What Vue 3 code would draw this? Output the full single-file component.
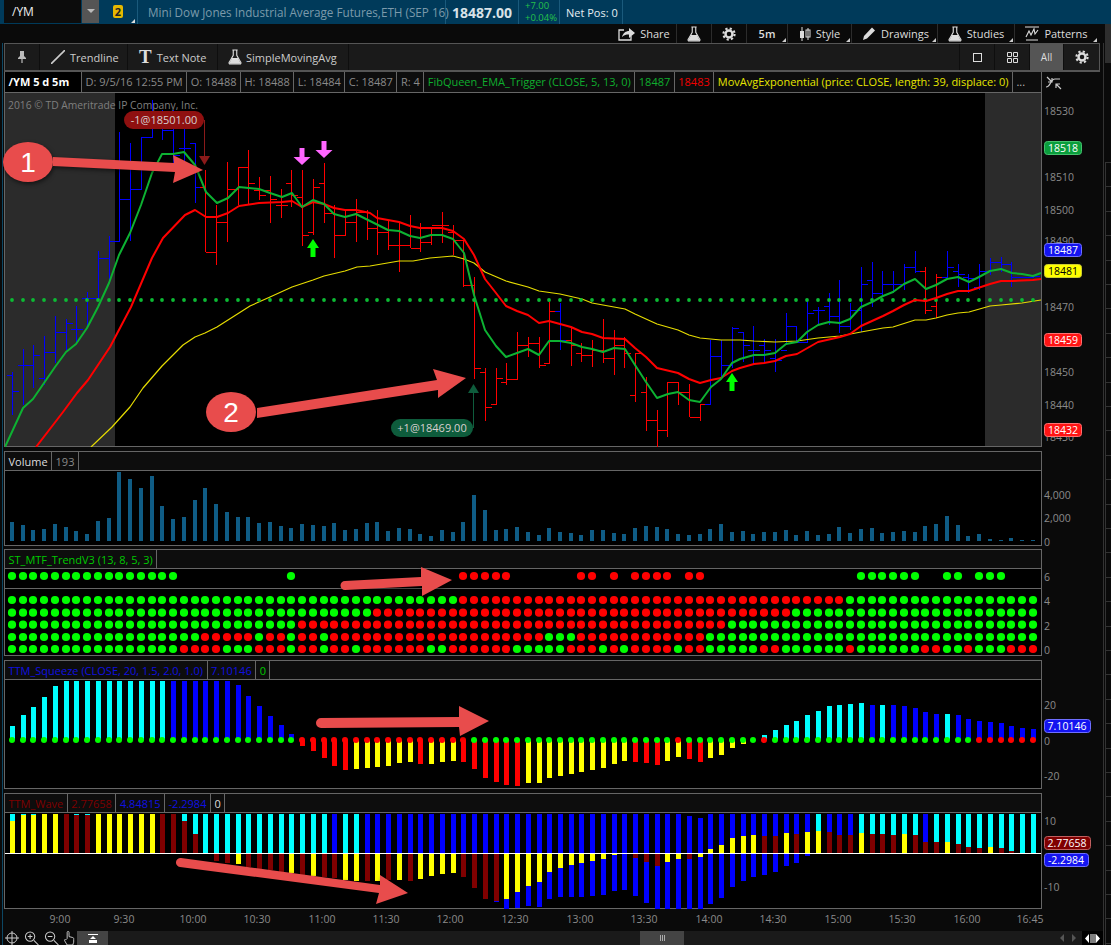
<template>
  <div class="app">
    <svg class="defs" width="0" height="0">
      <symbol id="flask" viewBox="0 0 16 18">
        <path d="M5 1h6M6 1v6L1.500 15a1.200 1.200 0 0 0 1 2h11a1.200 1.200 0 0 0 1-2L10 7V1" fill="none" stroke="currentColor" stroke-width="1.300" />
        <path d="M4.600 10h6.800l3.400 6.600H1.200z" fill="currentColor" />
      </symbol>
      <symbol id="gear" viewBox="0 0 16 16">
        <circle cx="8" cy="8" r="6.400" fill="none" stroke="currentColor" stroke-width="2.400" stroke-dasharray="2.500 2.530" />
        <circle cx="8" cy="8" r="4" fill="none" stroke="currentColor" stroke-width="2.800" />
      </symbol>
    </svg>

    <!-- quote bar -->
    <header class="quote">
      <div class="symbol">/YM</div>
      <div class="drop"><i></i></div>
      <div class="link"><b>2</b></div>
      <div class="q-cell q-name">Mini Dow Jones Industrial Average Futures,ETH (SEP 16)</div>
      <div class="q-cell q-last">18487.00</div>
      <div class="q-cell q-chg"><span>+7.00</span><span>+0.04%</span></div>
      <div class="q-cell q-pos">Net Pos: 0</div>
    </header>

    <!-- chart actions -->
    <nav class="actions">
      <div class="act a-share">
        <svg width="17" height="14" viewBox="0 0 17 14"><path d="M6 3H1v10h12V9" fill="none" stroke="#ddd" stroke-width="1.300" /><path d="M4 10c1-4 4-6 7-6V1l6 5-6 5V7.500C8 7.500 6 8 4 10z" fill="#ddd" /></svg>
        <span>Share</span>
      </div>
      <div class="act a-icon"><svg class="ic" width="14" height="16"><use href="#flask" /></svg></div>
      <div class="act a-icon"><svg class="ic" width="14" height="14"><use href="#gear" /></svg></div>
      <div class="act has-menu a-tf"><span>5m</span></div>
      <div class="act has-menu a-style">
        <svg width="12" height="14" viewBox="0 0 12 14"><path d="M3 0v14M9 1v12" stroke="#ddd" /><rect x="1" y="4" width="4" height="7" fill="#ddd" /><rect x="7" y="3" width="4" height="7" fill="none" stroke="#ddd" /></svg>
        <span>Style</span>
      </div>
      <div class="act has-menu a-draw">
        <svg width="13" height="13" viewBox="0 0 13 13"><path d="M0 13l1-4 8-8.500 3 3-8 8z" fill="#ddd" /></svg>
        <span>Drawings</span>
      </div>
      <div class="act has-menu a-studies">
        <svg class="ic" width="14" height="16"><use href="#flask" /></svg>
        <span>Studies</span>
      </div>
      <div class="act has-menu a-patterns">
        <svg width="14" height="15" viewBox="0 0 14 15"><path d="M0 1h14M1 14h12" stroke="#ddd" /><path d="M1 11l3-6 2 4 3-6 1 5 3-4" fill="none" stroke="#ddd" stroke-width="1.100" /></svg>
        <span>Patterns</span>
      </div>
    </nav>

    <div class="workspace">
      <div class="charts">
        <div class="tools">
          <div class="tool pin">
            <svg width="8" height="12" viewBox="0 0 8 12"><path d="M2 0h4v5l2 2v1H0V7l2-2zM3.400 8h1.200v4H3.400z" fill="#bbb" /></svg>
          </div>
          <div class="tool t-line">
            <svg width="14" height="14" viewBox="0 0 14 14"><path d="M0 14L14 0" stroke="#ccc" stroke-width="1.600" /></svg>
            <span>Trendline</span>
          </div>
          <div class="tool t-note"><em class="t-mark">T</em><span>Text Note</span></div>
          <div class="tool t-sma"><svg class="ic" width="14" height="16"><use href="#flask" /></svg><span>SimpleMovingAvg</span></div>
          <div class="tool-space"></div>
          <div class="tool square-cell"><i class="square"></i></div>
          <div class="tool square-cell">
            <svg width="11" height="11" viewBox="0 0 11 11"><path d="M.5.500h4v4h-4zM6.500.500h4v4h-4zM.5 6.500h4v4h-4zM6.500 6.500h4v4h-4z" fill="none" stroke="#ddd" /></svg>
          </div>
          <div class="tool all">All</div>
          <div class="tool square-cell last"><svg class="ic" width="14" height="14"><use href="#gear" /></svg></div>
        </div>

        <!-- price pane -->
        <div class="legend">
          <span class="lg title">/YM 5 d 5m</span>
          <span class="lg">D: 9/5/16 12:55 PM</span>
          <span class="lg">O: 18488</span>
          <span class="lg">H: 18488</span>
          <span class="lg">L: 18484</span>
          <span class="lg">C: 18487</span>
          <span class="lg">R: 4</span>
          <span class="lg fib">FibQueen_EMA_Trigger (CLOSE, 5, 13, 0)</span>
          <span class="lg fib">18487</span>
          <span class="lg red">18483</span>
          <span class="lg yel">MovAvgExponential (price: CLOSE, length: 39, displace: 0)</span>
          <span class="lg dots">...</span>
        </div>
        <svg class="plot" width="1099" height="354" viewBox="4 93 1099 354">
          <defs><clipPath id="pc"><rect x="5" y="93" width="1037" height="354" /></clipPath></defs>
          <rect class="frame" x="4.500" y="92.500" width="1037" height="354" fill="#000" />
          <rect x="5" y="93" width="110" height="353" fill="#2b2b2b" />
          <rect x="985" y="93" width="56" height="353" fill="#2b2b2b" />
          <text x="8" y="109" class="copy">2016 © TD Ameritrade IP Company, Inc.</text>
          <g clip-path="url(#pc)">
            <path v-for="b in priceBars" :key="b.i" :d="b.d" :stroke="b.color" fill="none" shape-rendering="crispEdges" />
            <polyline :points="yellowLine" class="ln" stroke="#e6dc00" stroke-width="1.200" />
            <circle v-for="i in 96" :key="i" :cx="px(i - 1)" cy="300" r="1.900" fill="#0cba34" />
            <polyline :points="redLine" class="ln" stroke="#ff0000" stroke-width="2" />
            <polyline :points="greenLine" class="ln" stroke="#0db232" stroke-width="2" />
          </g>
          <!-- trade markers -->
          <path d="M204.500 120v36" stroke="#8b1a1a" />
          <path d="M199 156h11l-5.500 9z" fill="#8b1a1a" />
          <rect x="124" y="111" width="80" height="18" rx="9" fill="#8f1010" />
          <text x="164" y="124" class="pill">-1@18501.00</text>
          <path d="M473.500 428v-35" stroke="#0e5c3c" />
          <path d="M468 393h11l-5.500-9z" fill="#0e5c3c" />
          <rect x="391" y="419" width="82" height="18" rx="9" fill="#0e5c3c" />
          <text x="432" y="432" class="pill">+1@18469.00</text>
          <path v-for="a in signalArrows" :key="a.x" :d="a.d" :fill="a.fill" />
          <!-- price axis -->
          <text v-for="t in priceTicks" :key="t.y" x="1044" :y="t.y" class="ax">{{ t.label }}</text>
          <g v-for="b in priceBadges" :key="b.label">
            <rect x="1044.500" :y="b.y - 6.500" width="37" height="13" rx="3" :fill="b.fill" :stroke="b.stroke" />
            <text x="1063" :y="b.y + 4" class="badge" :fill="b.text">{{ b.label }}</text>
          </g>
          <!-- auto fit -->
          <g transform="translate(1046 76)" fill="none" stroke="#ccc" stroke-width="1.200">
            <path d="M1 1l5 5M6 2v4H2M15 13l-5-5M10 12V8h4" />
            <path d="M0 11c5 0 4-8 9-8h5" />
          </g>
        </svg>

        <!-- volume -->
        <div class="legend sub">
          <span class="lg vol">Volume</span>
          <span class="lg">193</span>
        </div>
        <svg class="plot" width="1099" height="75" viewBox="4 471 1099 75">
          <rect class="frame" x="4.500" y="470.500" width="1037" height="75" fill="#000" />
          <rect v-for="b in volumeBars" :key="b.x" :x="b.x" :y="b.y" width="4" :height="b.h" fill="#0f5c85" />
          <text x="1044" y="499" class="ax">4,000</text>
          <text x="1044" y="522" class="ax">2,000</text>
          <text x="1044" y="546" class="ax">0</text>
        </svg>

        <!-- trend dots -->
        <div class="legend sub tight">
          <span class="lg mtf">ST_MTF_TrendV3 (13, 8, 5, 3)</span>
        </div>
        <svg class="plot" width="1099" height="87" viewBox="4 569 1099 87">
          <rect class="frame" x="4.500" y="568.500" width="1037" height="87" fill="#000" />
          <path d="M5 588.500h1036" stroke="#666" />
          <circle v-for="d in trendDots" :key="d.k" :cx="d.x" :cy="d.y" r="4.100" :fill="d.fill" />
          <text x="1044" y="581" class="ax">6</text>
          <text x="1044" y="605" class="ax">4</text>
          <text x="1044" y="630" class="ax">2</text>
          <text x="1044" y="654" class="ax">0</text>
        </svg>

        <!-- squeeze -->
        <div class="legend sub">
          <span class="lg blue">TTM_Squeeze (CLOSE, 20, 1.5, 2.0, 1.0)</span>
          <span class="lg blue">7.10146</span>
          <span class="lg mtf">0</span>
        </div>
        <svg class="plot" width="1099" height="109" viewBox="4 680 1099 109">
          <rect class="frame" x="4.500" y="679.500" width="1037" height="109" fill="#000" />
          <rect v-for="b in squeezeBars" :key="b.x" :x="b.x" :y="b.y" width="5" :height="b.h" :fill="b.fill" />
          <circle v-for="d in squeezeDots" :key="d.x" :cx="d.x" cy="740" r="3" :fill="d.fill" />
          <text x="1044" y="709" class="ax">20</text>
          <text x="1044" y="745" class="ax">0</text>
          <text x="1044" y="780" class="ax">-20</text>
          <rect x="1044.500" y="719.500" width="46" height="13" rx="3" fill="#1414f0" stroke="#6f6fff" />
          <text x="1067" y="730" class="badge" fill="#fff">7.10146</text>
        </svg>

        <!-- wave -->
        <div class="legend sub">
          <span class="lg dark">TTM_Wave</span>
          <span class="lg dark">2.77658</span>
          <span class="lg blue">4.84815</span>
          <span class="lg blue">-2.2984</span>
          <span class="lg white">0</span>
        </div>
        <svg class="plot" width="1099" height="96" viewBox="4 813 1099 96">
          <rect class="frame" x="4.500" y="812.500" width="1037" height="96" fill="#000" />
          <rect v-for="b in waveBars" :key="b.k" :x="b.x" :y="b.y" width="5" :height="b.h" :fill="b.fill" />
          <path d="M5 853.500h1036" stroke="#fff" />
          <text x="1044" y="825" class="ax">10</text>
          <text x="1044" y="891" class="ax">-10</text>
          <rect x="1044.500" y="836.500" width="46" height="13" rx="3" fill="#800000" stroke="#c06060" />
          <text x="1067" y="847" class="badge" fill="#fff">2.77658</text>
          <rect x="1044.500" y="853.500" width="44" height="13" rx="3" fill="#1414f0" stroke="#6f6fff" />
          <text x="1066" y="864" class="badge" fill="#fff">-2.2984</text>
        </svg>

        <svg class="plot" width="1099" height="22" viewBox="4 909 1099 22">
          <text v-for="t in timeTicks" :key="t.label" :x="t.x" y="923" class="tm">{{ t.label }}</text>
        </svg>

        <footer class="bottom">
          <div class="nav-icons">
            <svg width="14" height="14" viewBox="0 0 14 14" fill="none" stroke="#ccc"><circle cx="7" cy="7" r="5" /><path d="M7 0v14M0 7h14" /></svg>
            <svg width="15" height="14" viewBox="0 0 15 15" fill="none" stroke="#ccc" stroke-width="1.100"><circle cx="6" cy="6" r="5" /><path d="M3.500 6h5M6 3.500v5M10 10l5 5" /></svg>
            <svg width="15" height="14" viewBox="0 0 15 15" fill="none" stroke="#ccc" stroke-width="1.100"><circle cx="6" cy="6" r="5" /><path d="M3.500 6h5M10 10l5 5" /></svg>
            <svg width="11" height="14" viewBox="0 0 11 15" fill="none" stroke="#ccc"><path d="M3 8V1.500a1 1 0 0 1 2 0V6l4 1c1 .2 1 1 1 2v3l-1 3H3l-3-5c0-1 1-1 1.500-.5z" /></svg>
          </div>
          <div class="to-top">
            <svg width="10" height="9" viewBox="0 0 10 9"><path d="M0 .5h10" stroke="#fff" /><path d="M5 2l3 3H2zM1 6h8v3H1z" fill="#fff" /></svg>
          </div>
          <div class="track">
            <div class="thumb">
              <svg width="5" height="6" viewBox="0 0 5 6"><path d="M.5 0v6M2.500 0v6M4.500 0v6" stroke="#aaa" /></svg>
            </div>
            <i class="tri left"></i>
            <i class="tri right"></i>
          </div>
          <div class="pan">
            <svg width="15" height="9" viewBox="0 0 15 9"><path d="M0 4.500L4 0v9zM15 4.500L11 0v9z" fill="#fff" /><path d="M6 0v9M8 0v9M10 0v9" stroke="#fff" /></svg>
          </div>
        </footer>
      </div>

      <aside class="rail">
        <div class="rail-thumb"></div>
        <div class="rail-ticks"></div>
      </aside>
    </div>

    <!-- hand drawn annotations on top of the screenshot -->
    <svg class="notes" width="1111" height="945" viewBox="0 0 1111 945">
      <g class="note">
        <polygon points="53,157 174,163 173,155 203,170 173,183 175,172 53,166" />
        <polygon points="257,408 437,380 433,369 466,378 438,398 438,390 257,418" />
        <path d="M345 581L421 577 421 567 452 580 422 596 422 586 345 590a4.500 4.500 0 0 1 0-9z" />
        <path d="M321 718L459 717 459 706 489 721 460 736 459 727 321 728a5 5 0 0 1 0-10z" />
        <path d="M181 858L380 885 380 875 408 893 376 904 379 893 180 867a4.500 4.500 0 0 1 1-9z" />
        <ellipse cx="28" cy="162" rx="25" ry="20" />
        <ellipse cx="231" cy="412" rx="25" ry="20" />
      </g>
      <text x="28" y="172" class="num">1</text>
      <text x="231" y="422" class="num">2</text>
    </svg>
  </div>
</template>

<script setup>
const px = i => Math.round(12 + 10.745 * i)

// hi, lo, open, close in screen pixels
const ohlc = [
  [372,415,375,391],[349,405,365,365],[345,388,365,355],[336,385,378,352],[316,363,352,332],[319,350,332,323],
  [306,343,329,329],[292,327,298,298],[251,300,298,258],[236,282,258,241],[132,241,241,199],[143,241,199,189],
  [137,190,189,137],[100,137,137,120],[110,140,120,130],[110,163,130,155],[127,163,148,148],[143,203,143,187],
  [170,252,187,252],[205,265,252,222],[162,242,222,189],[167,205,189,167],[150,205,167,183],[177,200,190,195],
  [176,223,190,199],[189,218,205,205],[170,207,183,195],[170,246,197,235],[179,235,232,187],[163,223,183,213],
  [205,258,213,235],[210,236,235,222],[199,242,222,212],[210,240,212,228],[210,255,228,232],[220,250,232,245],
  [222,272,245,245],[215,248,245,248],[223,252,248,242],[227,245,242,225],[212,243,225,225],[225,255,232,240],
  [240,287,240,285],[277,379,285,368],[368,421,372,407],[368,405,404,378],[363,385,382,379],[332,380,379,345],
  [337,357,345,343],[337,368,343,365],[302,363,363,311],[303,350,311,340],[328,366,340,345],[343,362,353,355],
  [340,367,355,350],[319,363,350,358],[330,375,358,345],[337,368,345,353],[353,402,395,353],[377,431,392,420],
  [410,447,420,430],[382,437,430,382],[382,405,382,392],[384,417,392,417],[404,421,417,404],[340,404,404,356],
  [340,378,356,365],[327,368,365,328],[332,362,332,345],[326,365,350,350],[339,362,345,350],[339,372,358,360],
  [313,345,350,326],[326,342,326,342],[300,342,342,313],[307,325,310,310],[293,325,306,316],[280,333,316,326],
  [303,330,326,310],[267,332,310,284],[262,307,280,293],[271,297,293,284],[271,293,284,284],[264,290,284,267],
  [251,273,267,271],[267,314,271,310],[274,318,306,277],[251,278,277,267],[264,287,271,274],[274,293,277,278],
  [264,290,287,271],[258,275,271,262],[257,272,262,264],[262,287,264,277],[277,278,277,277],[275,277,277,276]
]

const barColor = i => {
  if (i <= 17 || i === 51 || (i >= 65 && i !== 85 && i !== 86)) return '#0000ff'
  return '#ff0000'
}

const priceBars = ohlc.map(([hi, lo, o, c], i) => {
  const x = px(i) + 0.5
  return {
    i,
    color: barColor(i),
    d: `M${x} ${hi}V${lo}M${x - 6} ${o + 0.5}H${x}M${x} ${c + 0.5}H${x + 6}`
  }
})

const greenLine = '5,447 23,408 33,399 55,367 66,352 76,344 87,328 98,307 109,283 119,255 130,233 141,205 152,173 162,154 173,154 184,152 195,165 206,192 217,203 228,198 239,187 259,189 270,193 282,197 292,193 302,207 313,200 324,204 334,214 345,217 356,214 370,221 388,230 399,231 410,236 420,238 431,235 442,235 453,239 464,253 474,295 485,330 496,346 506,357 517,353 528,349 539,355 549,341 560,341 571,343 582,347 592,349 603,352 614,348 625,349 635,365 646,382 657,398 668,394 678,392 689,400 700,402 711,387 721,379 732,363 740,359 754,355 764,355 775,353 786,344 797,342 807,332 818,325 829,322 840,323 850,319 861,307 872,302 883,296 893,292 904,284 915,279 926,289 936,285 947,279 958,277 969,282 979,277 990,271 1001,269 1012,273 1022,274 1033,276 1041,273'
const redLine = '36,447 63,412 77,393 88,380 110,347 131,307 152,258 163,238 185,215 195,210 206,217 217,217 228,213 239,206 259,203 282,202 292,201 302,207 313,202 324,204 334,208 345,210 356,210 370,213 377,218 399,222 410,226 420,228 442,228 453,231 464,239 474,255 485,279 496,293 506,306 517,311 528,315 539,323 549,321 560,324 571,327 582,332 592,334 603,338 625,339 635,348 646,357 657,368 678,373 689,379 700,383 711,380 721,378 732,371 740,368 754,364 764,363 775,361 786,356 797,354 818,342 840,337 850,334 861,326 883,316 893,311 904,305 915,300 926,301 936,298 947,294 958,291 969,291 990,284 1001,281 1012,281 1033,280 1041,279'
const yellowLine = '91,447 112,427 130,407 143,388 162,366 183,345 195,337 205,333 217,327 250,306 270,297 292,287 313,280 324,276 345,271 357,267 370,266 399,261 413,261 430,258 453,256 464,259 474,263 485,272 506,281 528,287 539,291 560,294 582,299 592,303 625,309 635,314 657,324 678,330 689,335 700,338 721,340 740,340 754,341 775,342 797,341 818,338 840,336 861,332 883,328 893,327 915,320 926,320 936,318 947,315 958,313 969,312 990,306 1001,305 1022,303 1041,300'

const downArrow = (x, y) => `M${x - 2.5} ${y}h5v9h6l-8.500 8-8.500-8h6z`
const upArrow = (x, y) => `M${x} ${y}l6 9h-3.500v9h-5v-9H${x - 6}z`
const signalArrows = [
  { x: 302, fill: '#ff66ff', d: downArrow(302, 148) },
  { x: 324, fill: '#ff66ff', d: downArrow(324, 141) },
  { x: 313, fill: '#00ff00', d: upArrow(313, 239) },
  { x: 732, fill: '#00ff00', d: upArrow(732, 373) }
]

const priceTicks = [
  { y: 115, label: '18530' }, { y: 181, label: '18510' }, { y: 214, label: '18500' },
  { y: 245, label: '18490' }, { y: 311, label: '18470' }, { y: 376, label: '18450' },
  { y: 409, label: '18440' }, { y: 441, label: '18430' }
]
const priceBadges = [
  { label: '18518', y: 148, fill: '#0a9e3c', stroke: '#45c06e', text: '#fff' },
  { label: '18487', y: 250, fill: '#1414f0', stroke: '#6f6fff', text: '#fff' },
  { label: '18481', y: 271, fill: '#ffff00', stroke: '#cccc30', text: '#000' },
  { label: '18459', y: 340, fill: '#ff1414', stroke: '#ff7070', text: '#fff' },
  { label: '18432', y: 430, fill: '#ff1414', stroke: '#ff7070', text: '#fff' }
]

// top edges of the volume bars, read off at 3x around y=448
const volumeTops = [
  222,231,246,243,228,237,249,258,219,210,72,93,120,84,174,213,207,156,120,168,192,207,207,225,222,234,240,228,231,234,225,246,243,225,
  222,249,240,243,258,264,246,252,222,141,186,246,243,237,252,261,240,252,255,261,246,246,255,258,240,234,237,243,258,261,258,243,228,252,
  249,258,252,252,246,261,249,261,258,237,255,243,240,255,252,249,252,234,228,204,231,264,258,273,276,270,276,276
]
const volumeBars = volumeTops.map((t, i) => {
  const y = Math.round(448 + t / 3)
  return { x: px(i) - 2, y, h: Math.max(1, 541 - y) }
})

const inRanges = (i, ranges) => ranges.some(([a, b]) => i >= a && i <= b)
const GREEN = '#00ff00'
const RED = '#ff0000'

const trendRows = [
  { y: 600, red: [[42, 77]] },
  { y: 612.7, red: [[34, 72]] },
  { y: 624.7, red: [[27, 66]] },
  { y: 637, red: [[18, 22], [24, 25], [27, 28], [30, 49], [53, 64]] },
  { y: 649, red: [[16, 19], [23, 25], [27, 28], [30, 31], [33, 38], [41, 46], [52, 54], [56, 56], [58, 61], [63, 64], [70, 71], [78, 78], [85, 86], [89, 89], [93, 95]] }
]
const trendTop = [
  [0, 15, GREEN], [26, 26, GREEN], [42, 46, RED], [53, 54, RED], [56, 56, RED], [58, 61, RED],
  [63, 64, RED], [79, 84, GREEN], [87, 88, GREEN], [90, 92, GREEN]
]
const trendDots = []
trendTop.forEach(([a, b, fill]) => {
  for (let i = a; i <= b; i++) trendDots.push({ k: `t${i}`, x: px(i), y: 576, fill })
})
trendRows.forEach((row, r) => {
  for (let i = 0; i < 96; i++) {
    trendDots.push({ k: `${r}-${i}`, x: px(i), y: row.y, fill: inRanges(i, row.red) ? RED : GREEN })
  }
})

const CYAN = '#00ffff'
const BLUE = '#0000ff'
const YELLOW = '#ffff00'
const DARK = '#800000'

// squeeze: end of each bar, at 3x around y=655
const squeezeEnds = [
  213,180,156,126,93,78,78,78,78,78,78,78,78,78,78,78,78,78,78,78,78,90,123,153,183,210,237,
  273,288,309,333,345,342,339,336,333,324,321,327,327,321,318,321,342,369,381,390,393,384,384,369,363,357,351,345,339,327,318,321,324,330,318,306,312,321,309,300,279,267,255,
  240,225,210,198,180,168,153,150,147,144,150,150,150,153,159,171,177,177,180,192,198,201,204,213,219,222
]
const squeezeColor = i => {
  if (i <= 14) return CYAN
  if (i <= 26) return BLUE
  if (i <= 31) return RED
  if ([38, 42, 43, 44, 45, 46, 47, 58, 59, 60, 63, 64].includes(i)) return RED
  if (i <= 69) return YELLOW
  if (i <= 79 || i === 81 || i === 87) return CYAN
  return BLUE
}
const squeezeBars = squeezeEnds.map((z, i) => {
  const y = Math.round(655 + z / 3)
  return { x: px(i) - 2, y: Math.min(y, 740), h: Math.abs(y - 740), fill: squeezeColor(i) }
})
const squeezeDots = squeezeEnds.map((_, i) => ({
  x: px(i),
  fill: inRanges(i, [[27, 42], [62, 62], [70, 70], [90, 95]]) ? RED : GREEN
}))

// wave: [upper colour, inner colour, inner top, lower colour, lower end, blue end] at 3x around y=655
const c = CYAN, b = BLUE, y = YELLOW, r = DARK
const waveRows = [
  [c,y,497],[c,y,480],[c,y,480],[c,y,477],[c,y,477],[c,r,477],[c,r,480],[c,r,480],[c,y,477],[c,y,477],[c,y,477],[c,y,477],[c,y,477],[c,y,477],[c,r,477],[c,r,477],[c,r,498],[c,r,537],
  [c],[c,0,0,r,618],[c,0,0,r,624],[c,0,0,y,627],[c,0,0,r,636],[c,0,0,r,642],[c,0,0,r,645],[c,0,0,r,650],[c,0,0,y,654],[c,0,0,r,660],[c,0,0,y,663],[c,0,0,r,666],[b,0,0,r,670],[c,0,0,y,675],[c,0,0,y,678],
  [b,0,0,r,678],[b,0,0,y,678],[b,0,0,r,675],[b,0,0,y,675],[b,0,0,r,678],[b,0,0,y,672],[b,0,0,y,663],[b,0,0,y,657],[b,0,0,y,654],[b,0,0,r,666],[b,0,0,r,699],[b,0,0,r,732],[b,0,0,r,738,741],
  [b,0,0,y,732,763],[b,0,0,y,711,759],[b,0,0,y,693,753],[b,0,0,y,681,756],[b,0,0,y,651,732],[b,0,0,y,639,726],[b,0,0,y,630,726],[b,0,0,y,624,726],[b,0,0,y,618,723],[b,0,0,y,612,720],[b,0,0,y,600,708],[b,0,0,y,597,705],
  [b,0,0,r,609,723],[b,0,0,r,621,744],[b,0,0,r,633,763],[b,0,0,y,621,763],[b,0,0,y,612,763],[b,0,0,r,612,763,483],[b,0,0,y,606,763,489],
  [b,y,582,0,0,748],[b,y,570,0,0,729],[b,y,549,0,0,696],[b,y,543,0,0,678],[b,y,540,0,0,666],[b,r,544,0,0,660],[b,r,544,0,0,651],[b,y,534,0,0,633],[b,r,537,0,0,624],[b,y,531,0,0,603],
  [c,y,528],[b,r,532],[b,r,540],[b,r,540],[c,y,534],[c,r,538],[c,r,537],[c,r,540],[c,y,537],[c,r,540],[b,r,561],[c,r,561],[c,y,561],[c,r,567],[c,r,576],[c,r,579],[c,y,576],[c,r,579],[c,r,588],[c],[c,0,0,r,597]
]
const wy = z => Math.round(655 + z / 3)
const ZERO = 853
const waveBars = []
waveRows.forEach(([up, inner, innerTop, low, lowEnd, blueEnd, upTop], i) => {
  const x = px(i) - 2
  const top = wy(upTop || 477)
  waveBars.push({ k: `u${i}`, x, y: top, h: ZERO - top, fill: up })
  if (inner) waveBars.push({ k: `i${i}`, x, y: wy(innerTop), h: ZERO - wy(innerTop), fill: inner })
  if (blueEnd) waveBars.push({ k: `b${i}`, x, y: ZERO, h: wy(blueEnd) - ZERO, fill: BLUE })
  if (low) waveBars.push({ k: `l${i}`, x, y: ZERO, h: wy(lowEnd) - ZERO, fill: low })
})

const timeTicks = [
  { x: 60, label: '9:00' }, { x: 124, label: '9:30' }, { x: 193, label: '10:00' }, { x: 257, label: '10:30' },
  { x: 322, label: '11:00' }, { x: 386, label: '11:30' }, { x: 450, label: '12:00' }, { x: 515, label: '12:30' },
  { x: 580, label: '13:00' }, { x: 644, label: '13:30' }, { x: 709, label: '14:00' }, { x: 773, label: '14:30' },
  { x: 838, label: '15:00' }, { x: 902, label: '15:30' }, { x: 967, label: '16:00' }, { x: 1030, label: '16:45' }
]
</script>

<style>
html, body {
  margin: 0;
  background: #0a0a0a;
}
</style>

<style scoped>
.app {
  position: relative;
  width: 1111px;
  height: 945px;
  overflow: hidden;
  background: #0a0a0a;
  color: #ccc;
  font-family: "Open Sans", "Liberation Sans", sans-serif;
  font-size: 11px;
}

.defs {
  position: absolute;
}

/* Quote bar */
.quote {
  display: flex;
  align-items: stretch;
  height: 24px;
  background: #003a5a;
  padding-left: 4px;
  box-sizing: border-box;
}

.symbol {
  width: 77px;
  background: #0c0c0c;
  color: #eee;
  font-size: 12px;
  line-height: 23px;
  padding-left: 8px;
  box-sizing: border-box;
  margin-bottom: 1px;
}

.drop {
  width: 17px;
  margin: 0 0 1px 1px;
  background: #555;
  position: relative;
}

.drop i {
  position: absolute;
  left: 5px;
  top: 9px;
  border: 4px solid transparent;
  border-top: 4px solid #bbb;
}

.link {
  width: 38px;
  position: relative;
  border-right: 1px solid #1a5a7c;
}

.link b {
  position: absolute;
  left: 14px;
  top: 5px;
  width: 10px;
  height: 13px;
  background: #e6b800;
  color: #222;
  font-size: 11px;
  line-height: 13px;
  text-align: center;
  border-radius: 2px;
}

.link::after {
  content: "";
  position: absolute;
  right: 2px;
  bottom: 1px;
  border-left: 4px solid transparent;
  border-bottom: 4px solid #ddd;
}

.q-cell {
  display: flex;
  align-items: center;
  border-right: 1px solid #1a5a7c;
  padding: 0 6px;
}

.q-name {
  width: 308px;
  box-sizing: border-box;
  padding-left: 10px;
  color: #7c9aab;
  font-size: 11.7px;
  white-space: nowrap;
}

.q-last {
  width: 73px;
  box-sizing: border-box;
  color: #d8e2e8;
  font-size: 14px;
  font-weight: 700;
}

.q-chg {
  width: 41px;
  box-sizing: border-box;
  flex-direction: column;
  align-items: flex-start;
  justify-content: center;
  color: #25c14a;
  font-size: 9.500px;
  line-height: 12px;
}

.q-pos {
  width: 63px;
  box-sizing: border-box;
  color: #e6eef2;
  font-size: 11px;
  white-space: nowrap;
}

/* Action row */
.actions {
  position: relative;
  display: flex;
  justify-content: flex-end;
  height: 19px;
  padding-right: 13px;
  box-sizing: border-box;
}

.actions::after {
  content: "";
  position: absolute;
  right: 0;
  top: 0;
  width: 6px;
  height: 19px;
  background: #2e2e2e;
}

.act {
  position: relative;
  display: flex;
  align-items: center;
  justify-content: center;
  gap: 5px;
  box-sizing: border-box;
  border-right: 1px solid #2c2c2c;
  color: #ddd;
  font-size: 11px;
  white-space: nowrap;
}

.act:last-child {
  border-right: none;
}

.a-share { width: 65px; }
.a-icon { width: 35px; }
.a-tf { width: 41px; font-weight: 600; }
.a-style { width: 64px; }
.a-draw { width: 86px; padding-left: 3px; }
.a-studies { width: 77px; }
.a-patterns { width: 83px; }

.act.has-menu::after {
  content: "";
  position: absolute;
  right: 1px;
  bottom: 1px;
  border-left: 4px solid transparent;
  border-bottom: 4px solid #ccc;
}

.ic {
  color: #ddd;
}

/* Main */
.workspace {
  display: flex;
  height: 902px;
  margin-left: 2px;
  border-left: 1px solid #0c4764;
  padding-left: 1px;
}

.charts {
  width: 1099px;
  flex: none;
}

.tools {
  display: flex;
  height: 29px;
  box-sizing: border-box;
  width: 1096px;
  background: #1a1a1a;
  border: 1px solid #555;
  border-bottom-width: 2px;
}

.tool {
  display: flex;
  align-items: center;
  gap: 6px;
  box-sizing: border-box;
  padding-left: 11px;
  border-right: 1px solid #0e0e0e;
  font-size: 11px;
  color: #ccc;
  white-space: nowrap;
}

.pin {
  width: 35px;
  justify-content: center;
  padding: 0;
}

.t-line { width: 88px; gap: 5px; }
.t-note { width: 90px; gap: 5px; }
.t-sma { width: 131px; padding-left: 10px; gap: 4px; }

.t-mark {
  font-family: "Liberation Serif", serif;
  font-style: normal;
  font-weight: 700;
  font-size: 19px;
  color: #ddd;
}

.tool-space {
  flex: 1;
  border-right: 1px solid #0e0e0e;
}

.square-cell {
  width: 35px;
  justify-content: center;
  padding: 0;
}

.square-cell.last {
  border-right: none;
}

.square {
  width: 7px;
  height: 7px;
  border: 1px solid #ddd;
}

.all {
  width: 34px;
  justify-content: center;
  padding: 0;
  background: #555;
  font-size: 10px;
  color: #ddd;
}

/* Legends */
.legend {
  display: flex;
  width: 1038px;
  height: 21px;
  box-sizing: border-box;
  background: #0d0d0d;
  border-left: 1px solid #666;
  border-right: 1px solid #666;
  color: #8a8a8a;
  font-size: 11px;
  line-height: 20px;
}

.legend.sub {
  height: 20px;
  margin-top: 4px;
  border-top: 1px solid #666;
  line-height: 19px;
}

.legend.sub.tight {
  margin-top: 3px;
}

.lg {
  padding: 0 3.500px;
  border-right: 1px solid #666;
  white-space: nowrap;
}

.title {
  width: 77px;
  box-sizing: border-box;
  background: #000;
  color: #fff;
  font-weight: 700;
}

.fib { color: #0fae2e; }
.red { color: #f00000; }
.yel { color: #e6e600; }
.dots { border-right: none; color: #bbb; }
.vol { color: #ddd; }
.mtf { color: #00c800; }
.blue { color: #1010e0; }
.dark { color: #7d0000; }
.white { color: #ddd; }

.plot {
  display: block;
  overflow: visible;
}

.frame {
  stroke: #666;
}

.ln {
  fill: none;
  stroke-linejoin: round;
}

.copy {
  fill: #7f7f7f;
  font-size: 10.300px;
}

.pill {
  fill: #d8d0d0;
  font-size: 11px;
  text-anchor: middle;
}

.ax {
  fill: #8a8a8a;
  font-size: 10.500px;
}

.badge {
  font-size: 10.500px;
  text-anchor: middle;
}

.tm {
  fill: #8a8a8a;
  font-size: 10.500px;
  text-anchor: middle;
}

/* Bottom */
.bottom {
  display: flex;
  height: 14px;
  background: #1a1a1a;
}

.nav-icons {
  display: flex;
  align-items: center;
  gap: 5px;
  width: 73px;
  flex: none;
  background: #0a0a0a;
  padding-left: 1px;
  box-sizing: border-box;
}

.to-top {
  width: 31px;
  flex: none;
  background: #444;
  display: flex;
  align-items: center;
  justify-content: center;
}

.track {
  position: relative;
  flex: 1;
}

.thumb {
  position: absolute;
  left: 532px;
  top: 0;
  display: flex;
  align-items: center;
  justify-content: center;
  width: 44px;
  height: 14px;
  background: #444;
}

.tri {
  position: absolute;
  top: 3px;
  border: 4px solid transparent;
}

.tri.left {
  right: 18px;
  border-right-color: #555;
}

.tri.right {
  right: 2px;
  border-left-color: #555;
}

.pan {
  width: 21px;
  flex: none;
  background: #000;
  display: flex;
  align-items: center;
  justify-content: center;
}

/* Right rail */
.rail {
  flex: 1;
  display: flex;
  flex-direction: column;
  border-left: 1px solid #333;
}

.rail-thumb {
  height: 20px;
  margin-left: 1px;
  background: #2e2e2e;
}

.rail-ticks {
  flex: 1;
  margin-top: 99px;
  margin-left: 1px;
  border-left: 1px solid #333;
  background: repeating-linear-gradient(to bottom, #333 0, #333 1px, #0a0a0a 1px, #0a0a0a 24.400px);
}

/* Annotations */
.notes {
  position: absolute;
  left: 0;
  top: 0;
  pointer-events: none;
}

.note {
  fill: #e84c4c;
  filter: drop-shadow(1px 2px 2px rgba(0, 0, 0, 0.55));
}

.num {
  fill: #fff;
  font-family: "Liberation Sans", sans-serif;
  font-size: 28px;
  text-anchor: middle;
}
</style>
